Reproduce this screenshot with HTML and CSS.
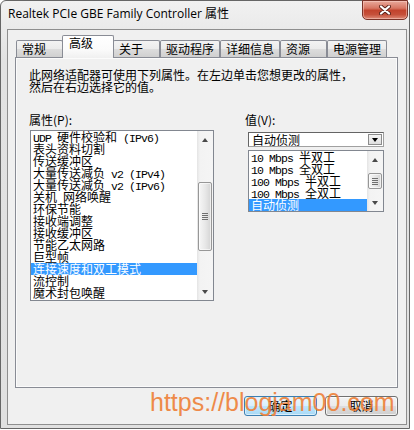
FILE: index.html
```html
<!DOCTYPE html>
<html lang="zh-CN">
<head>
    <meta charset="UTF-8">
    <title>Realtek PCIe GBE Family Controller 属性</title>
    <link rel="stylesheet" href="styles.css">
</head>
<body>
    <div class="window">
        <div class="titlebar">
            <span class="title">Realtek PCIe GBE Family Controller 属性</span>
            <button class="close-btn">
                <svg width="12" height="10" viewBox="0 0 12 10">
                    <path d="M2 1.5 L10 8.5 M10 1.5 L2 8.5" stroke="#5b2219" stroke-width="4" stroke-linecap="round"/>
                    <path d="M2 1.5 L10 8.5 M10 1.5 L2 8.5" stroke="#ffffff" stroke-width="2.2" stroke-linecap="round"/>
                </svg>
            </button>
        </div>

        <div class="client">
            <div class="tabs">
                <div class="tab">常规</div>
                <div class="tab active">高级</div>
                <div class="tab">关于</div>
                <div class="tab">驱动程序</div>
                <div class="tab">详细信息</div>
                <div class="tab">资源</div>
                <div class="tab">电源管理</div>
            </div>

            <div class="panel">
                <p class="intro">此网络适配器可使用下列属性。在左边单击您想更改的属性，<br>然后在右边选择它的值。</p>

                <div class="props">
                    <div class="prop-col">
                        <div class="label">属性(P):</div>
                        <div class="listbox prop-list">
                            <ul class="items">
                                <li><span class="mono">UDP </span>硬件校验和<span class="mono"> (IPv6)</span></li>
                                <li>表头资料切割</li>
                                <li>传送缓冲区</li>
                                <li>大量传送减负<span class="mono"> v2 (IPv4)</span></li>
                                <li>大量传送减负<span class="mono"> v2 (IPv6)</span></li>
                                <li>关机<span class="mono"> </span>网络唤醒</li>
                                <li>环保节能</li>
                                <li>接收端调整</li>
                                <li>接收缓冲区</li>
                                <li>节能乙太网路</li>
                                <li>巨型帧</li>
                                <li class="selected">连接速度和双工模式</li>
                                <li>流控制</li>
                                <li>魔术封包唤醒</li>
                            </ul>
                            <div class="scrollbar">
                                <div class="sb-btn"><span class="arrow-up"></span></div>
                                <div class="sb-track">
                                    <div class="thumb prop-thumb"><span class="grip"></span></div>
                                </div>
                                <div class="sb-btn"><span class="arrow-down"></span></div>
                            </div>
                        </div>
                    </div>

                    <div class="value-col">
                        <div class="label">值(V):</div>
                        <div class="combo">
                            <span class="combo-text">自动侦测</span>
                            <span class="combo-btn"><span class="arrow-down dark"></span></span>
                        </div>
                        <div class="listbox value-list">
                            <ul class="items">
                                <li><span class="mono">10 Mbps </span>半双工</li>
                                <li><span class="mono">10 Mbps </span>全双工</li>
                                <li><span class="mono">100 Mbps </span>半双工</li>
                                <li><span class="mono">100 Mbps </span>全双工</li>
                                <li class="selected">自动侦测</li>
                            </ul>
                            <div class="scrollbar">
                                <div class="sb-btn"><span class="arrow-up"></span></div>
                                <div class="sb-track">
                                    <div class="thumb value-thumb"><span class="grip"></span></div>
                                </div>
                                <div class="sb-btn"><span class="arrow-down"></span></div>
                            </div>
                        </div>
                    </div>
                </div>
            </div>

            <div class="buttons">
                <button class="btn default">确定</button>
                <button class="btn">取消</button>
            </div>
        </div>
    </div>

    <div class="watermark">https://blogjam00.com</div>
</body>
</html>
```

FILE: styles.css
```css
* {
    box-sizing: border-box;
}

body {
    margin: 0;
    background: #ffffff;
    font-family: "Noto Sans CJK SC", sans-serif;
    font-size: 12px;
    color: #000000;
}

.window {
    width: 410px;
    height: 429px;
    border: 1px solid #666666;
    border-radius: 6px 6px 0 0;
    background: linear-gradient(#f1f1f1, #e2e2e2 60px, #e0e0e0);
    padding: 0 2px 3px 6px;
    display: flex;
    flex-direction: column;
}

.titlebar {
    height: 28px;
    display: flex;
    justify-content: space-between;
    align-items: flex-start;
}

.title {
    padding: 5px 0 0 1px;
    font-family: "Open Sans", "Noto Sans CJK SC", sans-serif;
    font-size: 12px;
    line-height: 16px;
    color: #000000;
}

.close-btn {
    width: 46px;
    height: 20px;
    margin: -1px -1px 0 0;
    padding: 0;
    border: 1px solid #7a3328;
    border-radius: 0 0 5px 5px;
    background: linear-gradient(#e9a99b, #d77562 40%, #c2432d 52%, #c6503a 75%, #de8a77);
    box-shadow: inset 0 0 0 1px rgba(255, 220, 210, 0.45);
    display: flex;
    align-items: center;
    justify-content: center;
}

.client {
    height: 396px;
    border: 1px solid #8e8e8e;
    background: #f0f0f0;
    padding: 5px 8px 8px 7px;
    display: flex;
    flex-direction: column;
}

/* tabs */

.tabs {
    height: 22px;
    display: flex;
    align-items: flex-end;
    padding-left: 1px;
}

.tab {
    height: 17px;
    min-width: 47px;
    padding: 0 5px;
    border: 1px solid #898c95;
    border-bottom: none;
    border-radius: 2px 2px 0 0;
    background: linear-gradient(#f3f3f3, #ebebeb 50%, #dddddd 50%, #d0d0d0);
    line-height: 15px;
    white-space: nowrap;
}

.tab.active {
    position: relative;
    z-index: 1;
    height: 23px;
    min-width: 52px;
    margin: 0 -1px -1px -1px;
    padding: 0 6px;
    background: linear-gradient(#ffffff, #fbfbfb 60%, #f0f0f0);
    line-height: 14px;
}

.panel {
    height: 331px;
    border: 1px solid #898c95;
    box-shadow: inset 0 0 0 1px #fbfbfb;
    background: #f0f0f0;
    padding: 11px 0 0 13px;
}

.intro {
    margin: 0;
    line-height: 12px;
}

.props {
    display: flex;
    gap: 31px;
    margin-top: 21px;
}

.prop-col {
    width: 185px;
}

.value-col {
    width: 139px;
}

.label {
    height: 12px;
    line-height: 12px;
}

/* list boxes */

.listbox {
    display: flex;
    border: 1px solid #828790;
    background: #ffffff;
}

.prop-list {
    width: 184px;
    height: 171px;
    margin: 4px 0 0 1px;
}

.value-list {
    width: 136px;
    height: 62px;
    margin: 3px 0 0 3px;
}

.items {
    flex: 1;
    list-style: none;
    margin: 0;
    padding: 0;
    overflow: hidden;
}

.items li {
    height: 12px;
    line-height: 12px;
    padding-left: 2px;
    white-space: nowrap;
}

.items li.selected {
    background: #3399ff;
    color: #ffffff;
}

.mono {
    font-family: "Liberation Mono", monospace;
    font-size: 11.5px;
    letter-spacing: -0.9px;
    white-space: pre;
}

/* scrollbars */

.scrollbar {
    width: 16px;
    display: flex;
    flex-direction: column;
    background: linear-gradient(to right, #e4e4e4, #f3f3f3 3px, #f5f5f5);
}

.sb-btn {
    height: 17px;
    flex: none;
    display: flex;
    align-items: center;
    justify-content: center;
}

.sb-track {
    flex: 1;
}

.arrow-up,
.arrow-down {
    width: 0;
    height: 0;
    border-left: 3.5px solid transparent;
    border-right: 3.5px solid transparent;
}

.arrow-up {
    border-bottom: 4px solid #4a4a4a;
}

.arrow-down {
    border-top: 4px solid #4a4a4a;
}

.arrow-down.dark {
    border-top-color: #000000;
}

.thumb {
    margin: 0 1px;
    border: 1px solid #979797;
    border-radius: 2px;
    background: linear-gradient(to right, #f6f6f6, #e8e8e8 50%, #d4d4d4);
    box-shadow: inset 0 0 0 1px rgba(255, 255, 255, 0.6);
    display: flex;
    align-items: center;
    justify-content: center;
}

.prop-thumb {
    margin-top: 34px;
    height: 69px;
}

.value-thumb {
    margin-top: 5px;
    height: 16px;
}

.grip {
    width: 6px;
    height: 7px;
    background: repeating-linear-gradient(#6e6e6e 0 1px, transparent 1px 2px);
}

/* combo box */

.combo {
    width: 136px;
    height: 15px;
    margin: 6px 0 0 3px;
    border: 1px solid;
    border-color: #646464 #a0a0a0 #a0a0a0 #646464;
    background: #ffffff;
    display: flex;
    justify-content: space-between;
    align-items: center;
}

.combo-text {
    padding-left: 3px;
    line-height: 13px;
}

.combo-btn {
    width: 14px;
    height: 11px;
    margin-right: 1px;
    border: 1px solid #8c8c8c;
    background: linear-gradient(#f6f6f6, #dedede);
    display: flex;
    align-items: center;
    justify-content: center;
}

/* dialog buttons */

.buttons {
    display: flex;
    justify-content: flex-end;
    gap: 8px;
    margin-top: 8px;
}

.btn {
    width: 73px;
    height: 20px;
    padding: 0;
    border: 1px solid #707070;
    border-radius: 3px;
    background: linear-gradient(#f2f2f2, #ebebeb 50%, #dddddd 50%, #cfcfcf);
    box-shadow: inset 0 0 0 1px rgba(255, 255, 255, 0.7);
    font-family: "Noto Sans CJK SC", sans-serif;
    font-size: 12px;
    line-height: 16px;
    color: #000000;
}

.btn.default {
    border-color: #3c7fb1;
    background: linear-gradient(#eaf6fd, #d9f0fc 50%, #bee6fd 50%, #a7d9f5);
    box-shadow: inset 0 0 0 1px rgba(220, 240, 252, 0.9);
}

.watermark {
    position: absolute;
    left: 150px;
    top: 388px;
    font-family: "Liberation Sans", sans-serif;
    font-size: 25px;
    line-height: 29px;
    color: #ee7d33;
    opacity: 0.88;
    white-space: nowrap;
}
```
